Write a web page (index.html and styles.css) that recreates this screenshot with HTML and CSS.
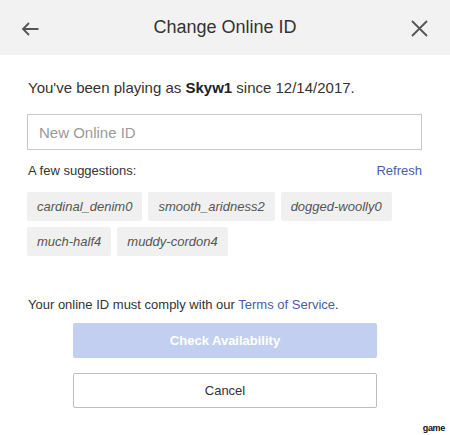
FILE: index.html
```html
<!DOCTYPE html>
<html>
<head>
<meta charset="utf-8">
<link rel="stylesheet" href="styles.css">
</head>
<body>
<div class="dialog">
  <div class="header">
    <svg class="back" width="18" height="14" viewBox="0 0 18 14"><path d="M17.5 7H2M8 1L2 7l6 6" fill="none" stroke="#555" stroke-width="1.8"/></svg>
    <div class="title">Change Online ID</div>
    <svg class="close" width="17" height="17" viewBox="0 0 17 17"><path d="M1 1l15 15M16 1L1 16" fill="none" stroke="#555" stroke-width="1.8"/></svg>
  </div>
  <div class="content">
    <p class="intro">You've been playing as <b>Skyw1</b> since 12/14/2017.</p>
    <div class="input">New Online ID</div>
    <div class="sugg-head"><span>A few suggestions:</span><span class="link">Refresh</span></div>
    <div class="chips">
      <span class="chip">cardinal_denim0</span>
      <span class="chip">smooth_aridness2</span>
      <span class="chip">dogged-woolly0</span>
      <span class="chip">much-half4</span>
      <span class="chip">muddy-cordon4</span>
    </div>
    <p class="terms">Your online ID must comply with our <span class="link">Terms of Service</span>.</p>
    <div class="btn primary">Check Availability</div>
    <div class="btn secondary">Cancel</div>
  </div>
  <div class="mark">game</div>
</div>
</body>
</html>
```
FILE: styles.css
```css
html, body { margin: 0; padding: 0; background: #fff; }
body { font-family: "Liberation Sans", Arial, sans-serif; color: #333; width: 450px; height: 435px; overflow: hidden; }
.dialog { position: relative; width: 450px; height: 435px; }
.header { height: 55px; background: #f2f2f2; display: flex; align-items: center; justify-content: space-between; padding: 0 22px 0 21px; box-sizing: border-box; }
.back { margin-top: 3px; }
.close { margin-top: 1px; }
.title { font-size: 18px; color: #333; }
.content { padding: 0 28px 0 27px; }
.intro { margin: 23px 0 0 1px; font-size: 15px; line-height: 20px; color: #333; }
.intro b { font-weight: bold; color: #222; }
.input { margin-top: 16px; height: 36px; box-sizing: border-box; border: 1px solid #c8c8c8; padding: 0 11px; display: flex; align-items: center; font-size: 15px; color: #9a9a9a; }
.sugg-head { margin: 12px 0 0 1px; display: flex; justify-content: space-between; font-size: 13px; line-height: 18px; color: #333; }
.link { color: #4a5ca8; }
.chips { margin-top: 12px; display: flex; flex-wrap: wrap; gap: 6px 6px; }
.chip { height: 29px; display: flex; align-items: center; padding: 0 10px; background: #f0f0f0; font-size: 13px; font-style: italic; color: #555; border-radius: 2px; }
.terms { margin: 40px 0 0 1px; font-size: 13px; line-height: 18px; color: #333; }
.btn { width: 304px; height: 35px; box-sizing: border-box; margin-left: 46px; display: flex; align-items: center; justify-content: center; font-size: 13px; border-radius: 2px; }
.primary { margin-top: 9px; background: #c3cff0; color: #fff; font-weight: bold; }
.secondary { margin-top: 15px; background: #fff; border: 1px solid #bdbdbd; color: #333; }
.mark { position: absolute; right: 5px; bottom: 2px; font-size: 9px; font-weight: bold; color: #111; letter-spacing: -0.3px; }
```
